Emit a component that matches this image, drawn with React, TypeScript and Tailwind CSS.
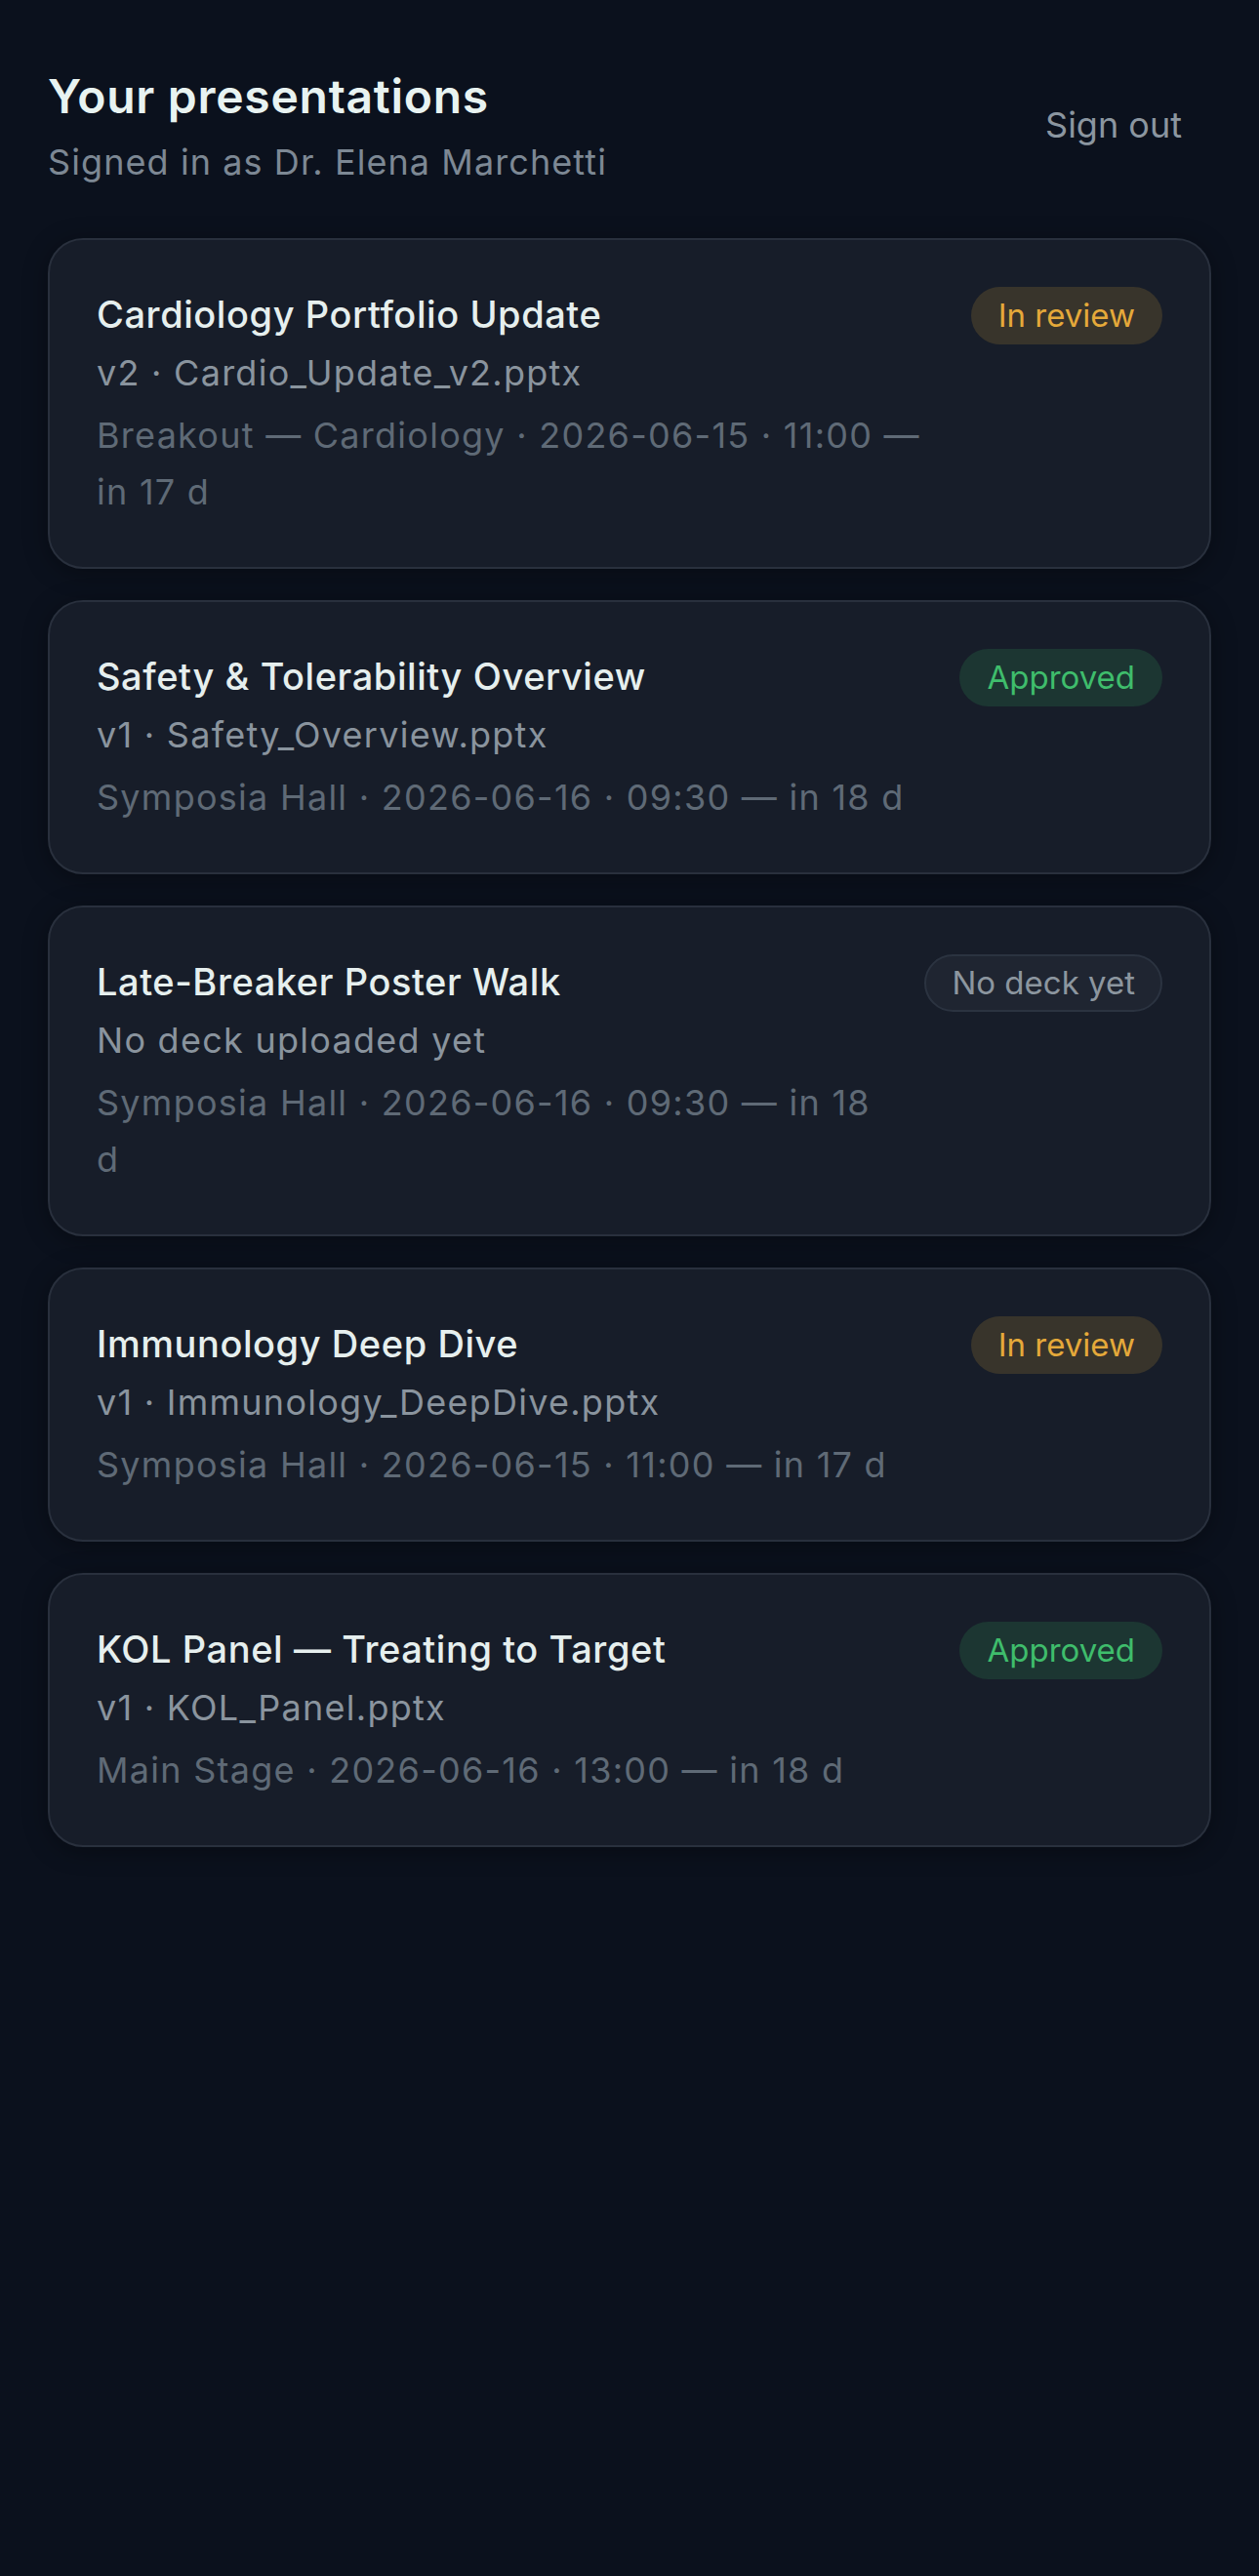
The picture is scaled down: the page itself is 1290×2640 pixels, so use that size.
type Status = "review" | "approved" | "none";

type Presentation = {
  title: string;
  file: string;
  venue: string;
  status: Status;
};

const PRESENTATIONS: Presentation[] = [
  {
    title: "Cardiology Portfolio Update",
    file: "v2 · Cardio_Update_v2.pptx",
    venue: "Breakout — Cardiology · 2026-06-15 · 11:00 — in 17 d",
    status: "review",
  },
  {
    title: "Safety & Tolerability Overview",
    file: "v1 · Safety_Overview.pptx",
    venue: "Symposia Hall · 2026-06-16 · 09:30 — in 18 d",
    status: "approved",
  },
  {
    title: "Late-Breaker Poster Walk",
    file: "No deck uploaded yet",
    venue: "Symposia Hall · 2026-06-16 · 09:30 — in 18 d",
    status: "none",
  },
  {
    title: "Immunology Deep Dive",
    file: "v1 · Immunology_DeepDive.pptx",
    venue: "Symposia Hall · 2026-06-15 · 11:00 — in 17 d",
    status: "review",
  },
  {
    title: "KOL Panel — Treating to Target",
    file: "v1 · KOL_Panel.pptx",
    venue: "Main Stage · 2026-06-16 · 13:00 — in 18 d",
    status: "approved",
  },
];

function StatusBadge({ status }: { status: Status }) {
  if (status === "review") {
    return (
      <span className="flex h-[59px] shrink-0 items-center rounded-full bg-[#38342b] px-[28px] text-[33px] text-[#e5a93a]">
        In review
      </span>
    );
  }
  if (status === "approved") {
    return (
      <span className="flex h-[59px] shrink-0 items-center rounded-full bg-[#1c3632] px-[28px] text-[33px] text-[#3fbd6c]">
        Approved
      </span>
    );
  }
  return (
    <span className="flex h-[59px] shrink-0 items-center rounded-full border-2 border-[#2b3340] bg-[#1f2531] px-[26px] text-[33px] text-[#8c969f]">
      No deck yet
    </span>
  );
}

function PresentationCard({ item }: { item: Presentation }) {
  return (
    <div className="flex items-start gap-9 rounded-[36px] border-2 border-[#29303d] bg-[#171d29] px-[48px] pt-[48px] pb-[48px] shadow-[0_4px_24px_rgba(0,0,0,0.35)]">
      <div className="min-w-0 flex-1">
        <div className="text-[38px] font-medium leading-[56px] tracking-[0.015em] text-[#e6efee]">
          {item.title}
        </div>
        <div className="mt-[7px] text-[36px] leading-[50px] tracking-[0.035em] text-[#8a949e]">
          {item.file}
        </div>
        <div className="mt-[10px] text-[36px] leading-[58px] tracking-[0.035em] text-[#5f6a76]">
          {item.venue}
        </div>
      </div>
      <StatusBadge status={item.status} />
    </div>
  );
}

export default function App() {
  return (
    <div
      className="min-h-[2640px] bg-[#0b111d] px-[49px] pt-[70px]"
      style={{ fontFamily: "Inter, 'Noto Sans', sans-serif" }}
    >
      {/* Header */}
      <header className="flex items-center justify-between">
        <div>
          <h1 className="text-[48px] font-semibold leading-[58px] tracking-[0.015em] text-[#e8f3f1]">
            Your presentations
          </h1>
          <p className="mt-[14px] text-[36px] leading-[48px] tracking-[0.03em] text-[#7d8894]">
            Signed in as Dr. Elena Marchetti
          </p>
        </div>
        <button className="-mt-[4px] px-[30px] py-3 text-[36px] text-[#8b96a0]">Sign out</button>
      </header>

      <div className="mt-[54px] flex flex-col gap-[32px]">
        {PRESENTATIONS.map((p) => (
          <PresentationCard key={p.title} item={p} />
        ))}
      </div>
    </div>
  );
}
